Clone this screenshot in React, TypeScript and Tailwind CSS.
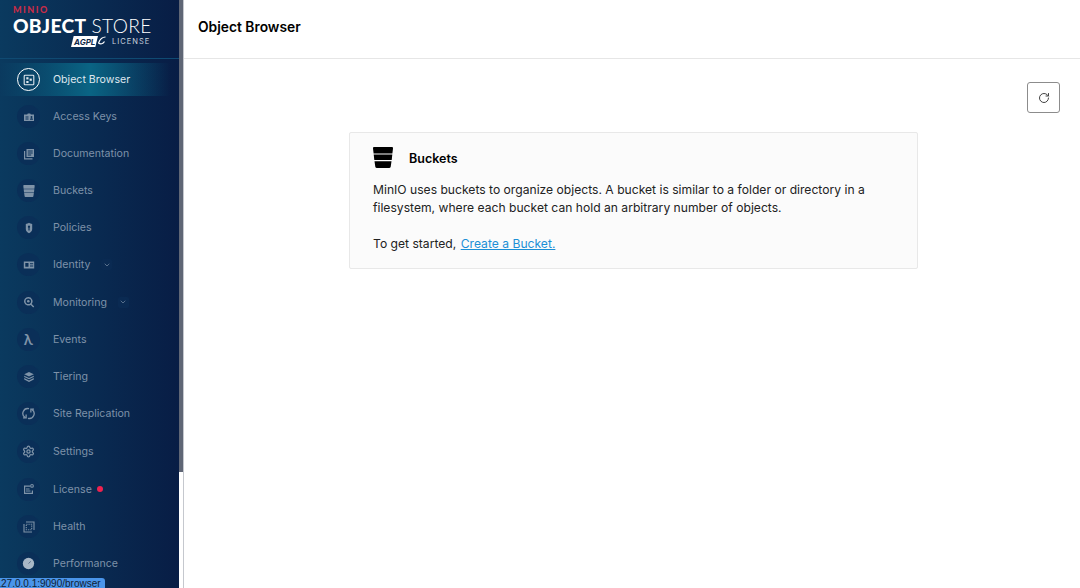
import { ReactNode } from "react";
import { ChevronDown, RotateCw, Settings } from "lucide-react";

const font = { fontFamily: "Inter, sans-serif" };

function BucketIcon({ className }: { className?: string }) {
  return (
    <svg viewBox="0 0 20 21" className={className} fill="currentColor">
      <path d="M0 1.200C0 .5.500 0 1.200 0h17.600c.7 0 1.200.5 1.200 1.200l-.6 5.300H.6L0 1.200Z" />
      <path d="M.7 7.500h18.600l-.6 5.500H1.300L.7 7.500Z" />
      <path d="M1.500 14.200h17l-.8 5.600c-.1.7-.6 1.200-1.300 1.200H3.600c-.7 0-1.200-.5-1.300-1.200l-.8-5.600Z" />
    </svg>
  );
}

function Glyph({ children }: { children: ReactNode }) {
  return (
    <svg viewBox="0 0 12 12" className="h-3 w-3" fill="currentColor">
      {children}
    </svg>
  );
}

function ObjectBrowserIcon() {
  return (
    <svg viewBox="0 0 12 12" className="h-3 w-3" fill="none" stroke="currentColor" strokeWidth="1.1">
      <rect x="1.200" y="1.200" width="9.600" height="9.600" rx="0.800" />
      <rect x="3.300" y="3.200" width="2.200" height="2.200" fill="currentColor" stroke="none" />
      <rect x="6.600" y="4.600" width="2.200" height="2.200" fill="currentColor" stroke="none" />
      <rect x="3.300" y="7" width="2.200" height="2" fill="currentColor" stroke="none" />
    </svg>
  );
}

interface NavItem {
  label: string;
  icon: ReactNode;
  height: string;
  chevron?: boolean;
  dot?: boolean;
}

const items: NavItem[] = [
  {
    label: "Access Keys",
    height: "h-[37px]",
    icon: (
      <Glyph>
        <path fillRule="evenodd" d="M1 3.500h3.200l.6-1h2.400l.6 1H11V10H1V3.500Zm1.500 2v1h3v-1h-3Zm0 2v1h3v-1h-3ZM8.500 5a1 1 0 1 0 0 2 1 1 0 0 0 0-2ZM7 8.700h3c0-1-.7-1.400-1.500-1.400S7 7.700 7 8.700Z" />
      </Glyph>
    ),
  },
  {
    label: "Documentation",
    height: "h-[37px]",
    icon: (
      <Glyph>
        <path fillRule="evenodd" d="M3.500 1H11v8H3.500V1Zm1.300 1.600v.9h4.900v-.9H4.800Zm0 2v.9h4.900v-.9H4.800Zm0 2v.9h3.400v-.9H4.800Z" />
        <path d="M1 3h1.200v7.200h7.300v1.200H1V3Z" />
      </Glyph>
    ),
  },
  { label: "Buckets", height: "h-[37px]", icon: <BucketIcon className="h-3 w-3" /> },
  {
    label: "Policies",
    height: "h-[37px]",
    icon: (
      <Glyph>
        <path fillRule="evenodd" d="M6 .8c1 .8 2.200 1.100 3.200 1.100v5c0 2-1.400 3.400-3.200 4.300C4.200 10.300 2.800 8.900 2.800 6.900v-5C3.800 1.900 5 1.600 6 .8Zm0 2.700a1.200 1.200 0 0 0-.6 2.200v2.700h1.200V5.700A1.200 1.200 0 0 0 6 3.500Z" />
      </Glyph>
    ),
  },
  {
    label: "Identity",
    height: "h-[37px]",
    chevron: true,
    icon: (
      <Glyph>
        <path fillRule="evenodd" d="M.8 2.500h10.400v7H.8v-7Zm1.500 1.500v3.800h3.200V4H2.300Zm4.700.3v1h3.200v-1H7Zm0 2.200v1h3.200v-1H7Z" />
      </Glyph>
    ),
  },
  {
    label: "Monitoring",
    height: "h-[38px]",
    chevron: true,
    icon: (
      <Glyph>
        <path fillRule="evenodd" d="M5.300 1a4.300 4.300 0 0 1 3.400 6.900l2.500 2.500-1 1-2.500-2.500A4.300 4.300 0 1 1 5.300 1Zm0 1.500a2.800 2.800 0 1 0 0 5.600 2.800 2.800 0 0 0 0-5.600Z" />
        <circle cx="5.300" cy="5.300" r="1.300" />
      </Glyph>
    ),
  },
  {
    label: "Events",
    height: "h-[37px]",
    icon: <span className="text-[14px] font-semibold leading-none">λ</span>,
  },
  {
    label: "Tiering",
    height: "h-[37px]",
    icon: (
      <Glyph>
        <path d="M6 1l4.800 2.300L6 5.600 1.200 3.300 6 1Z" />
        <path d="M1.200 4.700 6 7l4.800-2.300v1.200L6 8.200 1.200 5.900V4.700Z" />
        <path d="M1.200 7.100 6 9.400l4.800-2.300v1.500L6 11 1.200 8.600V7.100Z" />
      </Glyph>
    ),
  },
  {
    label: "Site Replication",
    height: "h-[37px]",
    icon: (
      <svg viewBox="0 0 12 12" className="h-[13px] w-[13px]" fill="none" stroke="currentColor" strokeWidth="1.200">
        <path d="M3 9.800A4.500 4.500 0 0 1 6.500 1.600" />
        <path d="M9 2.200a4.500 4.500 0 0 1-3.500 8.200" />
        <path d="M3.800 7v3H.9" />
        <path d="M8.200 5V2h2.900" />
      </svg>
    ),
  },
  {
    label: "Settings",
    height: "h-[38px]",
    icon: <Settings className="h-[13px] w-[13px]" strokeWidth={2.400} />,
  },
  {
    label: "License",
    height: "h-[38px]",
    dot: true,
    icon: (
      <Glyph>
        <path fillRule="evenodd" d="M1 2.500h6v1.200H2.200v6.100h6.600V7.500H10V11H1V2.500Zm2 3h3.500v1H3v-1Zm0 2h4.500v1H3v-1Z" />
        <path fillRule="evenodd" d="M9 1a1.900 1.900 0 1 1 0 3.800A1.900 1.900 0 0 1 9 1Zm0 1.100a.8.800 0 1 0 0 1.600.8.800 0 0 0 0-1.600Z" />
      </Glyph>
    ),
  },
  {
    label: "Health",
    height: "h-[37px]",
    icon: (
      <svg viewBox="0 0 12 12" className="h-3 w-3" fill="none" stroke="currentColor" strokeWidth="1.100">
        <path d="M3 1h8v8" />
        <path d="M1 3v8h8" />
        <rect x="3.300" y="3.300" width="5.400" height="5.400" strokeDasharray="1.200 1" />
      </svg>
    ),
  },
  {
    label: "Performance",
    height: "h-[37px]",
    icon: (
      <svg viewBox="0 0 12 12" className="h-[13px] w-[13px]">
        <circle cx="6" cy="6" r="5.200" fill="#a9b7c6" />
        <path d="M6 6l2.200-2" stroke="#4d6480" strokeWidth="0.800" />
      </svg>
    ),
  },
];

function Sidebar() {
  return (
    <aside className="flex h-full w-[179px] shrink-0 flex-col overflow-hidden bg-gradient-to-r from-[#0a3a5f] to-[#081d45]">
      <div className="flex h-[59px] shrink-0 flex-col items-start border-b border-[#0f4a72] pl-[13px] pt-[5px] text-white">
        <span
          className="text-[9px] font-black leading-[9px] tracking-[1.500px] text-[#c72c48]"
          style={{ fontFamily: "Lato, sans-serif" }}
        >
          MINIO
        </span>
        <span className="mt-[1px] text-[19.200px] leading-[21px] tracking-[0.300px]" style={{ fontFamily: "Lato, sans-serif" }}>
          <span className="font-black">OBJECT</span> <span className="font-light">STORE</span>
        </span>
        <div className="ml-[58px] flex items-center">
          <span className="flex h-[11px] w-[27px] items-center bg-white pl-[3px] text-[8px] font-bold italic leading-none text-[#102a4a] [clip-path:polygon(10%_0,100%_0,90%_100%,0_100%)]">
            AGPL
          </span>
          <svg viewBox="0 0 8 11" className="h-[11px] w-[8px]" fill="none" stroke="white" strokeWidth="1.200">
            <path d="M7.500 1C5 1 2 3 .5 7c2 1.500 4.500 1 6-1.500" />
          </svg>
          <span className="ml-[6px] text-[7.500px] leading-[9px] tracking-[1px] text-[#c9d3de]">LICENSE</span>
        </div>
      </div>

      <nav className="flex flex-col pt-[2px]" style={font}>
        <div className="my-[2px] flex h-[33px] items-center bg-gradient-to-r from-transparent via-[#0a6484] via-50% to-transparent to-95% pl-[17px] text-[#dfe7ee]">
          <span className="flex h-[23px] w-[23px] items-center justify-center rounded-full border border-white">
            <ObjectBrowserIcon />
          </span>
          <span className="ml-[13px] mt-[1px] text-[10.600px]">Object Browser</span>
        </div>
        {items.map((item) => (
          <div key={item.label} className={`flex ${item.height} shrink-0 items-center pl-[17px] text-[#7e92a9]`}>
            <span className="flex h-[23px] w-[23px] items-center justify-center rounded-full bg-[#0a2f58] text-[#7f93a8]">
              {item.icon}
            </span>
            <span className="ml-[13px] mt-[1px] text-[10.600px]">{item.label}</span>
            {item.chevron && (
              <span className="ml-[11px] flex h-[11px] w-[11px] items-center justify-center rounded-[2px] bg-[#0a2a52]">
                <ChevronDown className="h-2 w-2" />
              </span>
            )}
            {item.dot && <span className="ml-[5px] h-[6px] w-[6px] rounded-full bg-[#f0224f]" />}
          </div>
        ))}
      </nav>
    </aside>
  );
}

export default function App() {
  return (
    <div className="relative flex h-[588px] w-[1080px] overflow-hidden bg-white text-black" style={font}>
      <Sidebar />
      <div className="flex h-full w-[5px] shrink-0 flex-col border-r border-[#c5c8ce] bg-white">
        <div className="h-[472px] bg-[#5f6675]" />
      </div>

      <main className="flex min-w-0 flex-1 flex-col">
        <header className="flex h-[59px] shrink-0 items-center border-b border-[#e6e6e6] pb-[4px] pl-[14px]">
          <h1 className="text-[13.800px] font-semibold">Object Browser</h1>
        </header>
        <div className="flex justify-end pr-[20px] pt-[23px]">
          <button className="flex h-[31px] w-[33px] items-center justify-center rounded-[3px] border border-[#8c8c8c] text-[#444]">
            <RotateCw className="h-[12px] w-[12px]" />
          </button>
        </div>
        <section className="ml-[165px] mt-[19px] h-[137px] w-[569px] rounded-[2px] border border-[#e8e8e8] bg-[#fbfbfb] pl-[23px] pt-[14px]">
          <div className="flex items-center">
            <BucketIcon className="h-[21px] w-[20px] text-black" />
            <h2 className="ml-[16px] mt-[3px] text-[12.500px] font-semibold">Buckets</h2>
          </div>
          <p className="mt-[12px] text-[12.130px] leading-[18px] text-[#222]">
            MinIO uses buckets to organize objects. A bucket is similar to a folder or directory in a
            <br />
            filesystem, where each bucket can hold an arbitrary number of objects.
          </p>
          <p className="mt-[18px] text-[12.130px] leading-[18px] text-[#222]">
            To get started, <a className="ml-px text-[#1c8fd6] underline">Create a Bucket.</a>
          </p>
        </section>
      </main>

      <div className="absolute bottom-0 left-0 h-[10px] w-[105px] overflow-hidden rounded-tr-[3px] bg-[#4a95ea] text-[10px] leading-[11px] text-[#123]">
        <span className="-ml-[4.500px] block whitespace-nowrap" style={{ fontFamily: "Liberation Sans, sans-serif" }}>
          127.0.0.1:9090/browser
        </span>
      </div>
    </div>
  );
}
